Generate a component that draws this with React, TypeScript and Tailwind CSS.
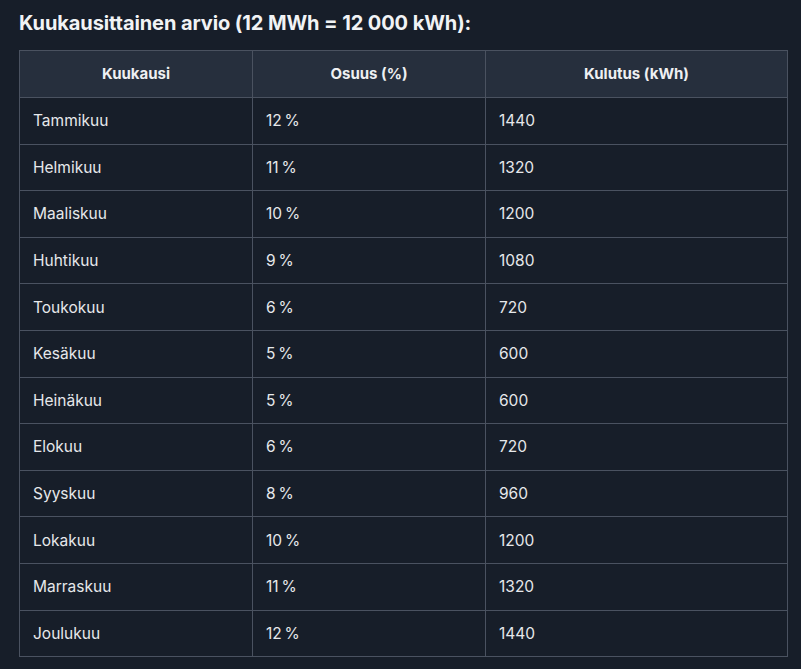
import React from "react";

const rows: [string, string, string][] = [
  ["Tammikuu", "12\u202F%", "1440"],
  ["Helmikuu", "11\u202F%", "1320"],
  ["Maaliskuu", "10\u202F%", "1200"],
  ["Huhtikuu", "9\u202F%", "1080"],
  ["Toukokuu", "6\u202F%", "720"],
  ["Kesäkuu", "5\u202F%", "600"],
  ["Heinäkuu", "5\u202F%", "600"],
  ["Elokuu", "6\u202F%", "720"],
  ["Syyskuu", "8\u202F%", "960"],
  ["Lokakuu", "10\u202F%", "1200"],
  ["Marraskuu", "11\u202F%", "1320"],
  ["Joulukuu", "12\u202F%", "1440"],
];

export default function App() {
  return (
    <div
      className="w-[801px] h-[669px] bg-[#171e29] text-[#e8eaed] overflow-hidden pl-[19px] pt-[8px]"
      style={{ fontFamily: "Inter, 'Noto Sans', sans-serif" }}
    >
      <h2 className="text-[20px] leading-[30px] font-bold text-[#f1f3f5] tracking-[-0.1px]">
        Kuukausittainen arvio (12 MWh = 12 000 kWh):
      </h2>
      <table className="mt-[12px] w-[768px] border-collapse table-fixed text-[15.5px]">
        <colgroup>
          <col className="w-[233px]" />
          <col className="w-[233px]" />
          <col className="w-[302px]" />
        </colgroup>
        <thead>
          <tr className="h-[47px] bg-[#262f3d]">
            {["Kuukausi", "Osuus (%)", "Kulutus (kWh)"].map((h) => (
              <th
                key={h}
                className="border border-[#4a5260] text-center font-bold text-[15px] text-[#eef0f2] px-[14px]"
              >
                {h}
              </th>
            ))}
          </tr>
        </thead>
        <tbody>
          {rows.map((r) => (
            <tr key={r[0]} className="h-[46.6px]">
              {r.map((c, i) => (
                <td
                  key={i}
                  className="border border-[#4a5260] px-[13px] text-left text-[#e6e8eb]"
                >
                  {c}
                </td>
              ))}
            </tr>
          ))}
        </tbody>
      </table>
    </div>
  );
}
